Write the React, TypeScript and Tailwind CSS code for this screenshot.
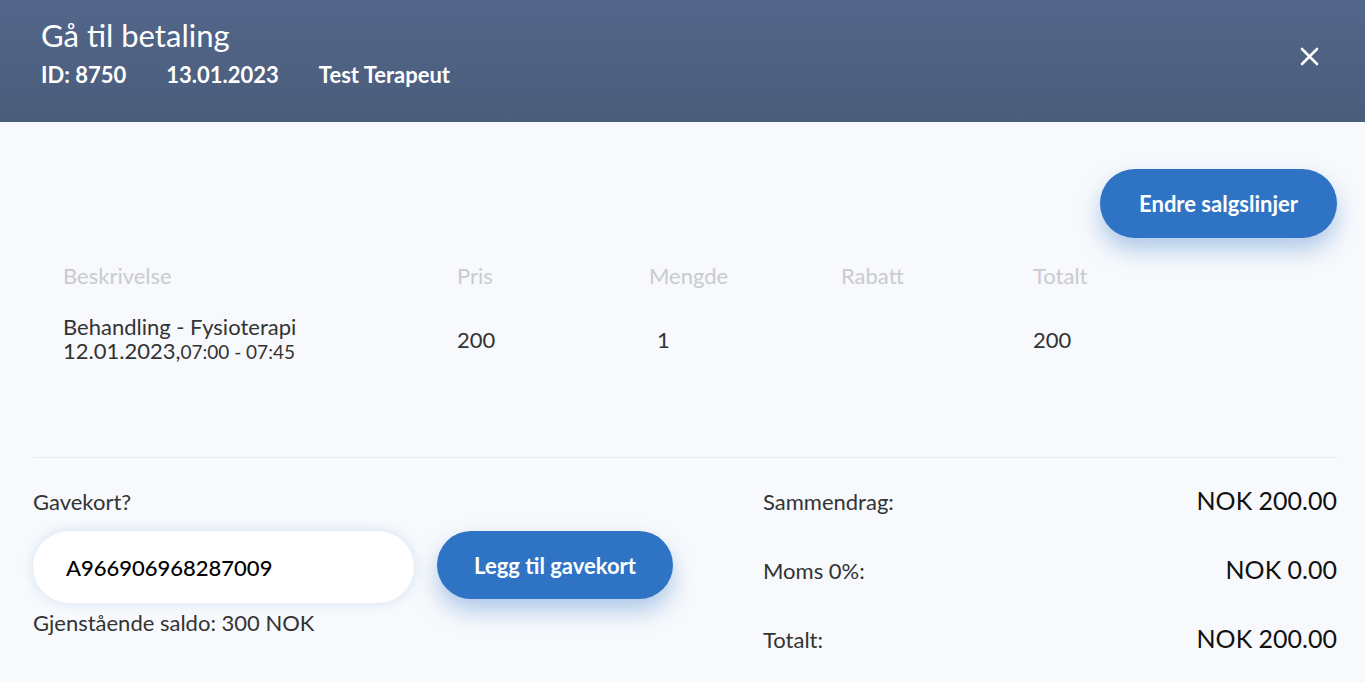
import React from "react";

export default function App() {
  return (
    <div className="w-[1365px] h-[682px] overflow-hidden bg-[#f7f9fc] font-['Lato',sans-serif] text-[#333333]">
      <header className="h-[122px] bg-gradient-to-b from-[#52668a] to-[#4b5d7b] pl-[41px] pr-[46px] flex items-start justify-between">
        <div className="pt-[16px]">
          <h1 className="text-[31px] leading-[38px] text-white font-normal">Gå til betaling</h1>
          <div className="mt-[8px] flex gap-10 text-[22px] leading-[26px] font-bold text-white">
            <span>ID: 8750</span>
            <span>13.01.2023</span>
            <span>Test Terapeut</span>
          </div>
        </div>
        <button className="mt-[46px] w-[20px] h-[20px] flex items-center justify-center text-white">
          <svg width="19" height="19" viewBox="0 0 19 19" fill="none" stroke="white" strokeWidth="2.6" strokeLinecap="round">
            <path d="M2 2 L17 17 M17 2 L2 17" />
          </svg>
        </button>
      </header>

      <main className="pr-[28px] pl-[33px] pt-[47px]">
        <div className="flex justify-end">
          <button className="h-[69px] w-[237px] rounded-full bg-[#2f73c5] text-white text-[22px] font-bold shadow-[0_12px_22px_rgba(47,115,197,0.35)]">
            Endre salgslinjer
          </button>
        </div>

        <div className="pl-[30px]">
          <div className="mt-[25px] grid grid-cols-[394px_192px_192px_192px_1fr] text-[22px] leading-[26px] text-[#c9cbce]">
            <span>Beskrivelse</span>
            <span>Pris</span>
            <span>Mengde</span>
            <span>Rabatt</span>
            <span>Totalt</span>
          </div>
          <div className="mt-[26px] grid grid-cols-[394px_192px_192px_192px_1fr] items-center text-[22px] leading-6 text-[#333333]">
            <div>
              <div>Behandling - Fysioterapi</div>
              <div>
                12.01.2023,<span className="text-[19px]">07:00 - 07:45</span>
              </div>
            </div>
            <span>200</span>
            <span className="pl-[8px]">1</span>
            <span></span>
            <span>200</span>
          </div>
        </div>

        <div className="mt-[93px] border-t border-[#e8eaee]"></div>

        <div className="pt-[29px] flex justify-between">
          <div className="mt-[2px]">
            <div className="text-[22px] leading-[26px]">Gavekort?</div>
            <div className="mt-[16px] flex items-start gap-[23px]">
              <div className="h-[72px] w-[381px] rounded-full bg-white shadow-[0_0_12px_rgba(47,115,197,0.18)] flex items-center pl-[33px] text-[22px] text-black font-medium">
                A966906968287009
              </div>
              <button className="h-[68px] w-[236px] rounded-full bg-[#2f73c5] text-white text-[22px] font-bold shadow-[0_12px_22px_rgba(47,115,197,0.35)]">
                Legg til gavekort
              </button>
            </div>
            <div className="mt-[7px] text-[22px] leading-[26px]">Gjenstående saldo: 300 NOK</div>
          </div>

          <div className="w-[574px] flex flex-col gap-[41px]">
            <div className="h-[28px] flex items-center justify-between">
              <span className="text-[22px]">Sammendrag:</span>
              <span className="text-[25px] text-[#111111]">NOK 200.00</span>
            </div>
            <div className="h-[28px] flex items-center justify-between">
              <span className="text-[22px]">Moms 0%:</span>
              <span className="text-[25px] text-[#111111]">NOK 0.00</span>
            </div>
            <div className="h-[28px] flex items-center justify-between">
              <span className="text-[22px]">Totalt:</span>
              <span className="text-[25px] text-[#111111]">NOK 200.00</span>
            </div>
          </div>
        </div>
      </main>
    </div>
  );
}
